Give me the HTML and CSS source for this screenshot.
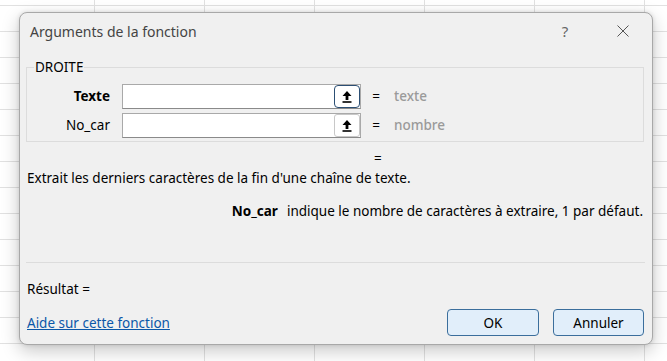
FILE: index.html
```html
<!DOCTYPE html>
<html lang="fr">
<head>
<meta charset="utf-8">
<title>Arguments de la fonction</title>
<link rel="stylesheet" href="styles.css">
</head>
<body>
<div class="dialog">
  <div class="titlebar">
    <span class="title">Arguments de la fonction</span>
    <span class="tb-btn help">?</span>
    <span class="tb-btn close"><svg width="12" height="12" viewBox="0 0 12 12"><path d="M0.5 0.5 L11.5 11.5 M11.5 0.5 L0.5 11.5" stroke="#555" stroke-width="1" fill="none"/></svg></span>
  </div>
  <fieldset class="group">
    <legend class="group-name">DROITE</legend>
    <div class="arg">
      <span class="arg-label required">Texte</span>
      <div class="field"><span class="ref-btn focused"><svg width="10" height="13" viewBox="0 0 10 13"><path d="M5 1 L9.5 6 L6.4 6 L6.4 10 L3.6 10 L3.6 6 L0.5 6 Z" fill="#000"/><rect x="0.5" y="11.2" width="9" height="1.6" fill="#000"/></svg></span></div>
      <span class="eq">=</span>
      <span class="val">texte</span>
    </div>
    <div class="arg">
      <span class="arg-label">No_car</span>
      <div class="field"><span class="ref-btn"><svg width="10" height="13" viewBox="0 0 10 13"><path d="M5 1 L9.5 6 L6.4 6 L6.4 10 L3.6 10 L3.6 6 L0.5 6 Z" fill="#000"/><rect x="0.5" y="11.2" width="9" height="1.6" fill="#000"/></svg></span></div>
      <span class="eq">=</span>
      <span class="val">nombre</span>
    </div>
  </fieldset>
  <div class="eq-row">=</div>
  <p class="desc">Extrait les derniers caractères de la fin d'une chaîne de texte.</p>
  <p class="argdesc"><b class="argname">No_car</b>indique le nombre de caractères à extraire, 1 par défaut.</p>
  <hr class="sep">
  <div class="result">Résultat =</div>
  <div class="footer">
    <a class="help-link" href="#">Aide sur cette fonction</a>
    <div class="buttons">
      <button class="btn ok">OK</button>
      <button class="btn cancel">Annuler</button>
    </div>
  </div>
</div>
</body>
</html>
```
FILE: styles.css
```css
html, body {
  margin: 0;
  padding: 0;
}
body {
  width: 667px;
  height: 361px;
  overflow: hidden;
  position: relative;
  background-color: #fff;
  background-image:
    repeating-linear-gradient(to right, transparent 0, transparent 94px, #e1e1e1 94px, #e1e1e1 95px, transparent 95px, transparent 110px),
    repeating-linear-gradient(to bottom, transparent 0, transparent 5px, #e1e1e1 5px, #e1e1e1 6px, transparent 6px, transparent 26px);
  font-family: "Noto Sans", "Open Sans", sans-serif;
  font-size: 13.5px;
  color: #000;
}
.dialog {
  position: absolute;
  left: 19px;
  top: 12px;
  width: 632px;
  height: 331px;
  background: #f0f0f0;
  border: 1px solid #a8a8a8;
  border-radius: 8px;
  box-shadow: 0 6px 18px rgba(0, 0, 0, 0.22), 0 0 4px rgba(0, 0, 0, 0.12);
}
.titlebar {
  display: flex;
  align-items: center;
  height: 36px;
}
.title {
  flex: 1;
  padding-left: 10px;
  font-size: 14px;
  color: #444;
}
.tb-btn {
  width: 46px;
  height: 36px;
  display: flex;
  align-items: center;
  justify-content: center;
  color: #666;
  font-size: 15px;
}
.help {
  margin-right: 12px;
}
.close {
  margin-right: 6px;
}
.group {
  margin: 10px 8px 0 6px;
  padding: 0 8px 4px 8px;
  border: 1px solid #dcdcdc;
  border-radius: 0;
}
.group-name {
  padding: 0 1px;
  font-size: 13.5px;
  line-height: 16px;
  margin-left: -1px;
  color: #000;
}
.arg {
  display: flex;
  align-items: center;
  height: 24px;
  margin-top: 5px;
}
.arg:first-of-type {
  margin-top: 9px;
}
.arg-label {
  width: 75px;
  text-align: right;
  margin-right: 12px;
}
.required {
  font-weight: 700;
}
.field {
  box-sizing: border-box;
  width: 239px;
  height: 25px;
  background: #fff;
  border: 1px solid #a9a9a9;
  border-bottom-color: #8a8a8a;
  display: flex;
  justify-content: flex-end;
  align-items: center;
}
.ref-btn {
  box-sizing: border-box;
  width: 26px;
  height: 23px;
  display: flex;
  align-items: center;
  justify-content: center;
  border: 1px solid #c8c8c8;
  border-radius: 3px;
  background: #fff;
}
.ref-btn.focused {
  border: 1.5px solid #2c4f74;
  border-radius: 4px;
}
.eq {
  width: 30px;
  text-align: center;
}
.val {
  margin-left: 3px;
  color: #9a9a9a;
  font-weight: 500;
}
.eq-row {
  margin-top: 8px;
  padding-left: 354px;
  line-height: 16px;
}
.desc {
  margin: 4px 0 0 0;
  padding-left: 7px;
  line-height: 16px;
}
.argdesc {
  margin: 17px 0 0 0;
  padding-right: 9px;
  text-align: right;
  line-height: 16px;
}
.argname {
  margin-right: 9px;
}
.sep {
  margin: 43px 7px 0 6px;
  border: 0;
  height: 1px;
  background: #dcdcdc;
}
.result {
  margin-top: 18px;
  padding-left: 7px;
  line-height: 16px;
}
.footer {
  display: flex;
  align-items: center;
  justify-content: space-between;
  margin-top: 12px;
  padding: 0 8px 0 7px;
}
.help-link {
  color: #0b57a8;
  text-decoration: underline;
}
.buttons {
  display: flex;
  gap: 14px;
}
.btn {
  box-sizing: border-box;
  width: 92px;
  height: 27px;
  border: 1px solid #3b6e9c;
  border-radius: 4px;
  background: #e1eefa;
  font-family: inherit;
  font-size: 13.5px;
  color: #000;
  padding: 0;
}
.cancel {
  width: 91px;
}
```
